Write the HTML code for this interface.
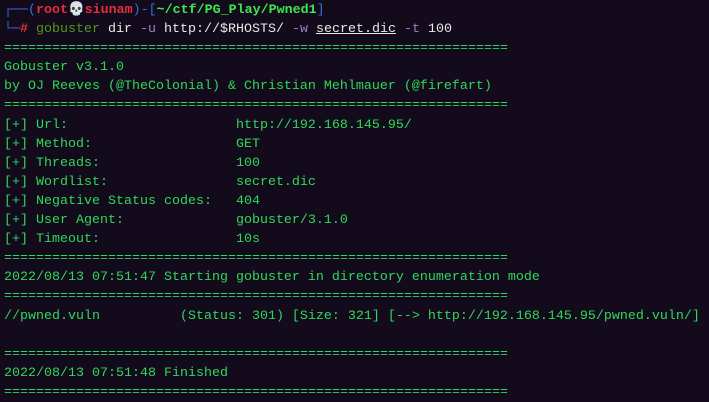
<!DOCTYPE html><html><head><style>
body{margin:0;background:#130b1b;width:709px;height:402px;overflow:hidden}
pre{margin:0;padding:1px 0 0 4px;font-family:"Liberation Mono","DejaVu Sans Mono",monospace;font-size:13.33px;line-height:19.1px;color:#2ed85a;white-space:pre}
.b{color:#3a6fd8}.r{color:#e0303a;font-weight:bold}.g{color:#3be84f;font-weight:bold}.dg{color:#4e9a1a}.w{color:#e8e8e8}.p{color:#a07cc0}
.u{text-decoration:underline;color:#e8e8e8}
.e{line-height:0}
</style></head><body><pre><span class="b">┌──(</span><span class="r">root<span class="e">💀</span>siunam</span><span class="b">)-[</span><span class="g">~/ctf/PG_Play/Pwned1</span><span class="b">]</span>
<span class="b">└─</span><span class="r">#</span> <span class="dg">gobuster</span> <span class="w">dir</span> <span class="p">-u</span> <span class="w">http://$RHOSTS/</span> <span class="p">-w</span> <span class="u">secret.dic</span> <span class="p">-t</span> <span class="w">100</span>
===============================================================
Gobuster v3.1.0
by OJ Reeves (@TheColonial) &amp; Christian Mehlmauer (@firefart)
===============================================================
[+] Url:                     http://192.168.145.95/
[+] Method:                  GET
[+] Threads:                 100
[+] Wordlist:                secret.dic
[+] Negative Status codes:   404
[+] User Agent:              gobuster/3.1.0
[+] Timeout:                 10s
===============================================================
2022/08/13 07:51:47 Starting gobuster in directory enumeration mode
===============================================================
//pwned.vuln          (Status: 301) [Size: 321] [--&gt; http://192.168.145.95/pwned.vuln/]
                                                                                       
===============================================================
2022/08/13 07:51:48 Finished
===============================================================
</pre></body></html>
